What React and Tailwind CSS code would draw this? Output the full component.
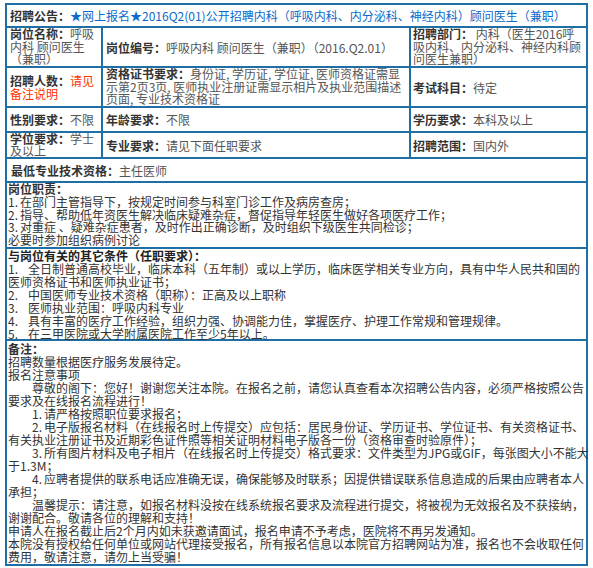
const B = "border-r-2 border-b-2 border-[#1f6fa6]";

function L({ children }) {
  return <span className="font-bold text-[#333]">{children}</span>;
}

function N({ children, w = "w-[12px]" }) {
  return <span className={`inline-block ${w}`}>{children}</span>;
}

export default function App() {
  return (
    <div className="bg-white w-[593px] h-[568px] pt-[3px] pl-[5px] text-[12px] leading-[13px] text-[#555] font-['Noto_Sans_CJK_SC',sans-serif]">
      <div className="grid w-[583px] grid-cols-[96px_308px_177px] grid-rows-[23px_40px_40px_25px_26px_24px_66px_92px_225px] border-l-2 border-t-2 border-[#1f6fa6]">
        {/* Row 1 */}
        <div className={`${B} col-span-3 flex items-center pl-[3px] whitespace-nowrap`}>
          <L>招聘公告：</L>
          <span className="text-[#0b6bcb]">★网上报名★2016Q2(01)公开招聘内科（呼吸内科、内分泌科、神经内科）顾问医生（兼职）</span>
        </div>

        {/* Row 2 */}
        <div className={`${B} flex items-center pl-[3px] leading-[12.6px]`}>
          <div>
            <L>岗位名称：</L>呼吸<br />内科 顾问医生<br />（兼职）
          </div>
        </div>
        <div className={`${B} flex items-center pl-[3px] whitespace-nowrap`}>
          <div>
            <L>岗位编号：</L>呼吸内科 顾问医生（兼职）（2016.Q2.01）
          </div>
        </div>
        <div className={`${B} flex items-center pl-[2px] leading-[12.6px] whitespace-nowrap`}>
          <div>
            <L>招聘部门：</L> 内科（医生2016呼<br />吸内科、内分泌科、神经内科顾<br />问医生兼职）
          </div>
        </div>

        {/* Row 3 */}
        <div className={`${B} flex items-center pl-[3px]`}>
          <div>
            <L>招聘人数：</L>
            <span className="text-[#ff3300]">请见<br />备注说明</span>
          </div>
        </div>
        <div className={`${B} flex items-center pl-[3px] leading-[12.6px] whitespace-nowrap`}>
          <div>
            <L>资格证书要求：</L>身份证, 学历证, 学位证, 医师资格证需显<br />示第2页3页, 医师执业注册证需显示相片及执业范围描述<br />页面, 专业技术资格证
          </div>
        </div>
        <div className={`${B} flex items-center pl-[2px]`}>
          <div>
            <L>考试科目：</L>待定
          </div>
        </div>

        {/* Row 4 */}
        <div className={`${B} flex items-center pl-[3px] whitespace-nowrap`}>
          <div><L>性别要求：</L>不限</div>
        </div>
        <div className={`${B} flex items-center pl-[3px]`}>
          <div><L>年龄要求：</L>不限</div>
        </div>
        <div className={`${B} flex items-center pl-[2px]`}>
          <div><L>学历要求：</L>本科及以上</div>
        </div>

        {/* Row 5 */}
        <div className={`${B} flex items-center pl-[3px] leading-[12px]`}>
          <div><L>学位要求：</L>学士<br />及以上</div>
        </div>
        <div className={`${B} flex items-center pl-[3px]`}>
          <div><L>专业要求：</L>请见下面任职要求</div>
        </div>
        <div className={`${B} flex items-center pl-[2px]`}>
          <div><L>招聘范围：</L>国内外</div>
        </div>

        {/* Row 6 */}
        <div className={`${B} col-span-3 flex items-center pl-[4px]`}>
          <div><L>最低专业技术资格：</L>主任医师</div>
        </div>

        {/* Row 7 */}
        <div className={`${B} col-span-3 pl-[1px] leading-[12.8px] text-[#333] whitespace-nowrap`}>
          <div><L>岗位职责：</L></div>
          <div><N>1.</N>在部门主管指导下，按规定时间参与科室门诊工作及病房查房；</div>
          <div><N>2.</N>指导、帮助低年资医生解决临床疑难杂症，督促指导年轻医生做好各项医疗工作；</div>
          <div><N>3.</N>对重症 、疑难杂症患者，及时作出正确诊断，及时组织下级医生共同检诊；</div>
          <div>必要时参加组织病例讨论</div>
        </div>

        {/* Row 8 */}
        <div className={`${B} col-span-3 pl-[1px] text-[#333] whitespace-nowrap`}>
          <div className="font-bold text-[#222]">与岗位有关的其它条件（任职要求）：</div>
          <div><N w="w-[20px]">1.</N>全日制普通高校毕业，临床本科（五年制）或以上学历，临床医学相关专业方向，具有中华人民共和国的</div>
          <div>医师资格证书和医师执业证书；</div>
          <div><N w="w-[20px]">2.</N>中国医师专业技术资格（职称）：正高及以上职称</div>
          <div><N w="w-[20px]">3.</N>医师执业范围：呼吸内科专业</div>
          <div><N w="w-[20px]">4.</N>具有丰富的医疗工作经验，组织力强、协调能力佳，掌握医疗、护理工作常规和管理规律。</div>
          <div><N w="w-[20px]">5.</N>在三甲医院或大学附属医院工作至少5年以上。</div>
        </div>

        {/* Row 9 */}
        <div className={`${B} col-span-3 pl-[1px] pt-px text-[#333] whitespace-nowrap`}>
          <div><L>备注：</L></div>
          <div>招聘数量根据医疗服务发展待定。</div>
          <div>报名注意事项</div>
          <div className="pl-[24px]">尊敬的阁下：您好！谢谢您关注本院。在报名之前，请您认真查看本次招聘公告内容，必须严格按照公告</div>
          <div>要求及在线报名流程进行！</div>
          <div className="pl-[24px]"><N>1.</N>请严格按照职位要求报名；</div>
          <div className="pl-[24px]"><N>2.</N>电子版报名材料（在线报名时上传提交）应包括：居民身份证、学历证书、学位证书、有关资格证书、</div>
          <div>有关执业注册证书及近期彩色证件照等相关证明材料电子版各一份（资格审查时验原件）；</div>
          <div className="pl-[24px]"><N>3.</N>所有图片材料及电子相片（在线报名时上传提交）格式要求：文件类型为JPG或GIF，每张图大小不能大</div>
          <div>于1.3M；</div>
          <div className="pl-[24px]"><N>4.</N>应聘者提供的联系电话应准确无误，确保能够及时联系；因提供错误联系信息造成的后果由应聘者本人</div>
          <div>承担；</div>
          <div className="pl-[24px]">温馨提示：请注意，如报名材料没按在线系统报名要求及流程进行提交，将被视为无效报名及不获接纳，</div>
          <div>谢谢配合。敬请各位的理解和支持！</div>
          <div>申请人在报名截止后2个月内如未获邀请面试，报名申请不予考虑，医院将不再另发通知。</div>
          <div>本院没有授权给任何单位或网站代理接受报名，所有报名信息以本院官方招聘网站为准，报名也不会收取任何</div>
          <div>费用，敬请注意，请勿上当受骗！</div>
        </div>
      </div>
    </div>
  );
}
